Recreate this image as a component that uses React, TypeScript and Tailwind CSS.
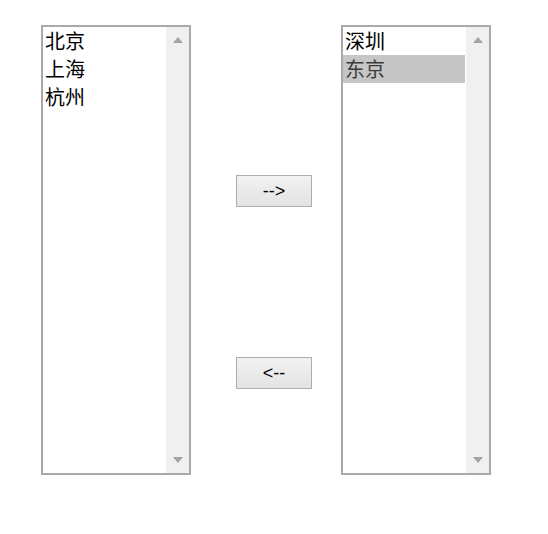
import { useState } from "react";

const cjk = { fontFamily: '"Microsoft YaHei", "Noto Sans CJK SC", sans-serif' };

function ListBox({ items, selected, onSelect }: { items: string[]; selected: number | null; onSelect: (i: number) => void }) {
  return (
    <div className="w-[150px] h-[450px] border-2 border-[#a9a9a9] bg-white flex">
      <div className="flex-1 flex flex-col">
        {items.map((item, i) => (
          <div
            key={item}
            onClick={() => onSelect(i)}
            style={cjk}
            className={
              "h-[28px] leading-[27px] pl-[2px] text-[20px] cursor-default " +
              (selected === i ? "bg-[#c6c6c6] text-[#3a3a3a]" : "text-black")
            }
          >
            {item}
          </div>
        ))}
      </div>
      <div className="w-[23px] ml-[1px] bg-[#f0f0f0] flex flex-col items-center justify-between pt-[10px] pb-[10px]">
        <svg width="10" height="6" viewBox="0 0 10 6">
          <path d="M0 6 L5 0 L10 6 Z" fill="#a3a3a3" />
        </svg>
        <svg width="10" height="6" viewBox="0 0 10 6">
          <path d="M0 0 L5 6 L10 0 Z" fill="#a3a3a3" />
        </svg>
      </div>
    </div>
  );
}

function Btn({ label, onClick }: { label: string; onClick: () => void }) {
  return (
    <button
      onClick={onClick}
      className="w-[76px] h-[32px] border border-[#adadad] bg-gradient-to-b from-[#f2f2f2] to-[#e3e3e3] text-[18px] text-black"
      style={{ fontFamily: '"Liberation Sans", Arial, sans-serif' }}
    >
      {label}
    </button>
  );
}

export default function App() {
  const [left, setLeft] = useState(["北京", "上海", "杭州"]);
  const [right, setRight] = useState(["深圳", "东京"]);
  const [selLeft, setSelLeft] = useState<number | null>(null);
  const [selRight, setSelRight] = useState<number | null>(1);

  const moveRight = () => {
    if (selLeft === null) return;
    setRight([...right, left[selLeft]]);
    setLeft(left.filter((_, i) => i !== selLeft));
    setSelLeft(null);
  };
  const moveLeft = () => {
    if (selRight === null) return;
    setLeft([...left, right[selRight]]);
    setRight(right.filter((_, i) => i !== selRight));
    setSelRight(null);
  };

  return (
    <div className="w-[548px] h-[534px] bg-white pl-[41px] pt-[25px] flex items-start">
      <ListBox items={left} selected={selLeft} onSelect={setSelLeft} />
      <div className="w-[150px] h-[450px] flex flex-col pl-[45px] pt-[150px] gap-[150px]">
        <Btn label="-->" onClick={moveRight} />
        <Btn label="<--" onClick={moveLeft} />
      </div>
      <ListBox items={right} selected={selRight} onSelect={setSelRight} />
    </div>
  );
}
